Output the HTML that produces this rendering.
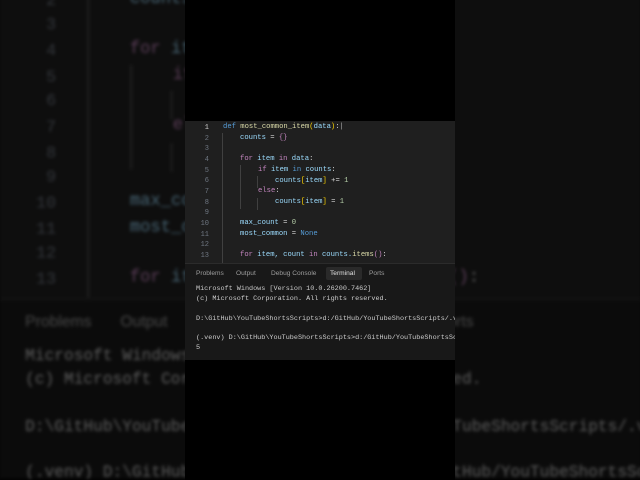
<!DOCTYPE html>
<html><head><style>
html,body{margin:0;padding:0;width:640px;height:480px;overflow:hidden;background:#000;}
#wrap{position:relative;width:640px;height:480px;overflow:hidden;background:#000;}
.panel{position:absolute;width:270px;height:238px;font-family:"Liberation Mono",monospace;}
.ed{position:absolute;left:0;top:0;width:270px;height:142px;background:#1f1f1f;overflow:hidden;}
.ln{position:absolute;left:0;width:24px;text-align:right;color:#6e7681;font-size:7px;}
.cd{position:absolute;left:38px;white-space:pre;color:#9cdcfe;font-size:7.2px;}
.ig{position:absolute;width:1px;background:#404040;}
.term{position:absolute;left:0;top:142px;width:270px;height:96px;background:#181818;border-top:1px solid #2b2b2b;overflow:hidden;}
#bg{height:218px;}
#bg .term{height:75px;}
#bg .tl{line-height:6px;}
.tab{position:absolute;top:6px;font-family:"Liberation Sans",sans-serif;font-size:6.6px;color:#9d9d9d;}
.tl{position:absolute;left:11px;white-space:pre;color:#cccccc;font-size:6.8px;}
.k{color:#c586c0}.b{color:#569cd6}.f{color:#dcdcaa}.y{color:#ffd700}.n{color:#b5cea8}.w{color:#d4d4d4}
#bg{left:0;top:0;transform-origin:0 0;transform:translate(-1px,-40px) scale(2.38);filter:brightness(0.45) blur(0.7px);}
#mask{position:absolute;left:185px;top:0;width:270px;height:480px;background:#000;}
#fg{left:185px;top:121px;}
</style></head><body>
<div id="wrap">
<div id="bg" class="panel"></div>
<div id="mask"></div>
<div id="fg" class="panel">
<div class="ed">
<div class="ig" style="left:37px;top:12px;height:130px"></div>
<div class="ig" style="left:55px;top:44px;height:44px"></div>
<div class="ig" style="left:72px;top:55px;height:12px"></div>
<div class="ig" style="left:72px;top:77px;height:12px"></div>
<div class="ln" style="top:3px;color:#cccccc">1</div><div class="cd" style="top:2px;left:38px"><span class="b">def</span> <span class="f">most_common_item</span><span class="y">(</span>data<span class="y">)</span><span class="w">:</span><span style="color:#aeafad">|</span></div>
<div class="ln" style="top:14px">2</div><div class="cd" style="top:13px;left:55px">counts <span class="w">=</span> <span class="k">{}</span></div>
<div class="ln" style="top:24px">3</div>
<div class="ln" style="top:35px">4</div><div class="cd" style="top:34px;left:55px"><span class="k">for</span> item <span class="k">in</span> data<span class="w">:</span></div>
<div class="ln" style="top:46px">5</div><div class="cd" style="top:45px;left:73px"><span class="k">if</span> item <span class="b">in</span> counts<span class="w">:</span></div>
<div class="ln" style="top:56px">6</div><div class="cd" style="top:56px;left:90px">counts<span class="y">[</span>item<span class="y">]</span> <span class="w">+=</span> <span class="n">1</span></div>
<div class="ln" style="top:67px">7</div><div class="cd" style="top:66px;left:73px"><span class="k">else</span><span class="w">:</span></div>
<div class="ln" style="top:78px">8</div><div class="cd" style="top:77px;left:90px">counts<span class="y">[</span>item<span class="y">]</span> <span class="w">=</span> <span class="n">1</span></div>
<div class="ln" style="top:88px">9</div>
<div class="ln" style="top:99px">10</div><div class="cd" style="top:98px;left:55px">max_count <span class="w">=</span> <span class="n">0</span></div>
<div class="ln" style="top:110px">11</div><div class="cd" style="top:109px;left:55px">most_common <span class="w">=</span> <span class="b">None</span></div>
<div class="ln" style="top:120px">12</div>
<div class="ln" style="top:131px">13</div><div class="cd" style="top:130px;left:55px"><span class="k">for</span> item, count <span class="k">in</span> counts.<span class="f">items</span><span class="k">()</span><span class="w">:</span></div>
</div>
<div class="term">
<div style="position:absolute;left:141px;top:3px;width:36px;height:13px;background:#2a2a2a;border-radius:2px"></div>
<div class="tab" style="left:11px">Problems</div>
<div class="tab" style="left:51px">Output</div>
<div class="tab" style="left:86px">Debug Console</div>
<div class="tab" style="left:145px;color:#e0e0e0">Terminal</div>
<div class="tab" style="left:184px">Ports</div>
<div class="tl" style="top:21px">Microsoft Windows [Version 10.0.26200.7462]</div>
<div class="tl" style="top:31px">(c) Microsoft Corporation. All rights reserved.</div>
<div class="tl" style="top:51px">D:\GitHub\YouTubeShortsScripts>d:/GitHub/YouTubeShortsScripts/.venv</div>
<div class="tl" style="top:70px">(.venv) D:\GitHub\YouTubeShortsScripts>d:/GitHub/YouTubeShortsScripts</div>
<div class="tl last" style="top:80px">5</div>
</div>
</div>
</div>
<script>
var bg=document.getElementById('bg');bg.innerHTML=document.getElementById('fg').innerHTML;
var l=bg.querySelector('.last');if(l)l.remove();
</script>
</body></html>
